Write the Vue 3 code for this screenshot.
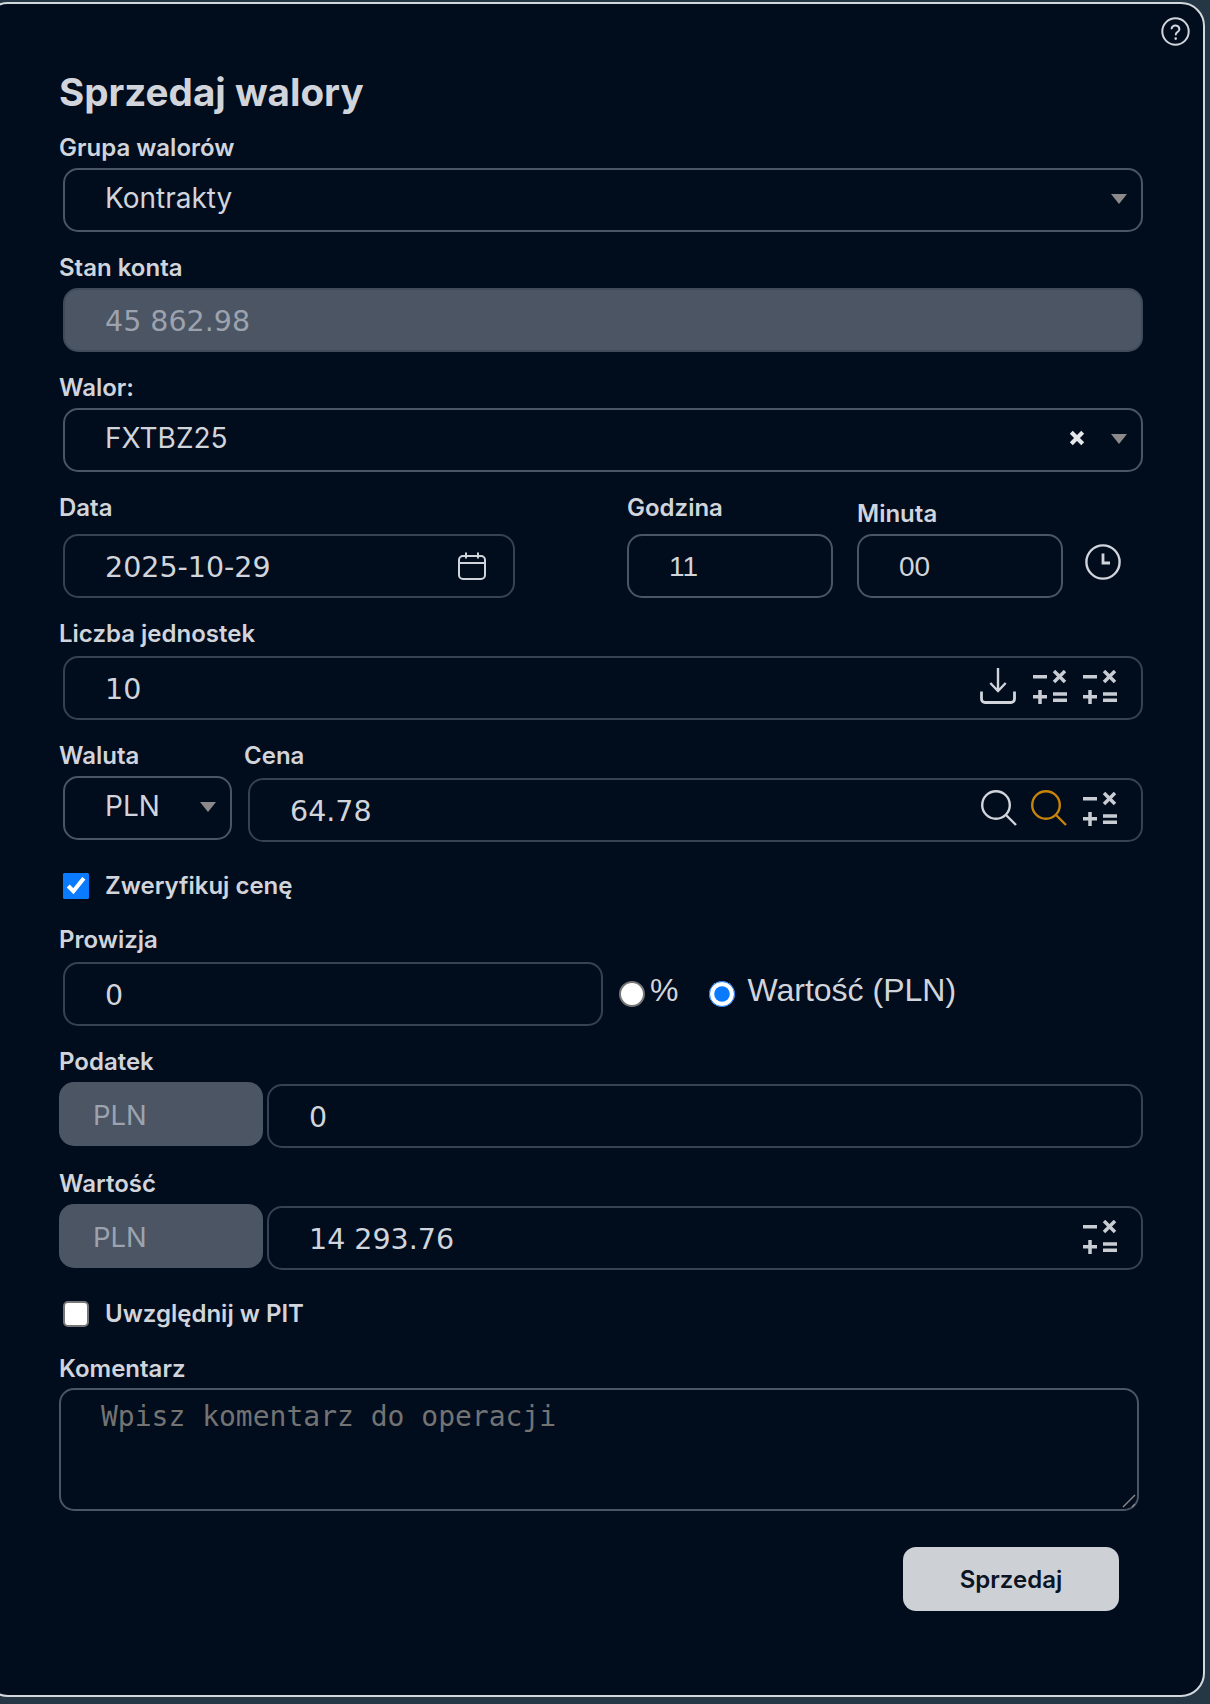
<script setup>
import { ref } from 'vue'

const group = ref('Kontrakty')
const asset = ref('FXTBZ25')
const currency = ref('PLN')
const verify = ref(true)
const inPit = ref(false)
const feeType = ref('value')
</script>

<template>
  <div class="card">
    <svg class="help" viewBox="0 0 29 29" fill="none" stroke="currentColor" stroke-width="2">
      <circle cx="14.5" cy="14.5" r="13.2" />
      <path d="M10.6 11.4a4 4 0 0 1 7.8 .8c0 2.6-3.6 3-3.6 5.2" stroke-linecap="round" />
      <circle cx="14.7" cy="21.6" r="1.3" fill="currentColor" stroke="none" />
    </svg>

    <h1 class="title">Sprzedaj walory</h1>

    <div class="field first">
      <label class="label gap6">Grupa walorów</label>
      <div class="control pick">
        <select v-model="group" class="sel">
          <option>Kontrakty</option>
        </select>
        <span class="caret"></span>
      </div>
    </div>

    <div class="field">
      <label class="label gap6">Stan konta</label>
      <div class="control disabled">
        <input class="inp" value="45 862.98" disabled />
      </div>
    </div>

    <div class="field">
      <label class="label gap6">Walor:</label>
      <div class="control pick">
        <select v-model="asset" class="sel">
          <option>FXTBZ25</option>
        </select>
        <svg class="clear" viewBox="0 0 14 14" stroke="currentColor" stroke-width="3.6">
          <path d="M2 2l10 10M12 2L2 12" />
        </svg>
        <span class="caret"></span>
      </div>
    </div>

    <div class="field date-row">
      <div class="date-col">
        <label class="label gap12">Data</label>
        <div class="control soft">
          <input class="inp" value="2025-10-29" />
          <svg class="calendar" viewBox="0 0 30 30" fill="none" stroke="currentColor" stroke-width="2">
            <rect x="2" y="5" width="26" height="23" rx="4" />
            <path d="M2 12h26M9 1.5v6M21 1.5v6" />
          </svg>
        </div>
      </div>
      <div class="hour-col">
        <label class="label gap12">Godzina</label>
        <div class="control">
          <input class="inp plain" value="11" />
        </div>
      </div>
      <div class="minute-col">
        <label class="label gap6">Minuta</label>
        <div class="control">
          <input class="inp plain" value="00" />
        </div>
      </div>
      <svg class="clock" viewBox="0 0 36 36" fill="none" stroke="currentColor" stroke-width="2.4">
        <circle cx="18" cy="18" r="16.6" />
        <path d="M18 9.5v9.5h7" stroke-width="2.8" />
      </svg>
    </div>

    <div class="field">
      <label class="label gap8">Liczba jednostek</label>
      <div class="control soft">
        <input class="inp" value="10" />
        <svg class="download" viewBox="0 0 36 36" fill="none" stroke="currentColor" stroke-width="2.4">
          <path d="M18 0v23M10.300 15l7.700 8 7.700-8" />
          <path d="M1.500 23.500v7.500a3.500 3.500 0 0 0 3.500 3.500h26a3.500 3.500 0 0 0 3.500-3.500v-7.500" stroke-width="2.800" />
        </svg>
        <svg class="calc" viewBox="0 0 34 34" fill="none" stroke="currentColor" stroke-width="3.500">
          <path d="M0 6.700h14M21 1l11 11M32 1L21 12M0 26.700h14M7 20v14M20 24h14M20 30.200h14" />
        </svg>
        <svg class="calc" viewBox="0 0 34 34" fill="none" stroke="currentColor" stroke-width="3.500">
          <path d="M0 6.700h14M21 1l11 11M32 1L21 12M0 26.700h14M7 20v14M20 24h14M20 30.200h14" />
        </svg>
      </div>
    </div>

    <div class="field price-row">
      <div class="currency-col">
        <label class="label gap6">Waluta</label>
        <div class="control pick narrow">
          <select v-model="currency" class="sel">
            <option>PLN</option>
          </select>
          <span class="caret"></span>
        </div>
      </div>
      <div class="price-col">
        <label class="label gap8">Cena</label>
        <div class="control soft price">
          <input class="inp" value="64.78" />
          <svg class="search" viewBox="0 0 36 36" fill="none" stroke="currentColor" stroke-width="2.4">
            <circle cx="15" cy="15" r="13.800" />
            <path d="M25 25l10 10" />
          </svg>
          <svg class="search orange" viewBox="0 0 36 36" fill="none" stroke="currentColor" stroke-width="2.4">
            <circle cx="15" cy="15" r="13.800" />
            <path d="M25 25l10 10" />
          </svg>
          <svg class="calc" viewBox="0 0 34 34" fill="none" stroke="currentColor" stroke-width="3.500">
            <path d="M0 6.700h14M21 1l11 11M32 1L21 12M0 26.700h14M7 20v14M20 24h14M20 30.200h14" />
          </svg>
        </div>
      </div>
    </div>

    <label class="check verify">
      <input v-model="verify" type="checkbox" />
      <span>Zweryfikuj cenę</span>
    </label>

    <div class="field f-fee">
      <label class="label gap8">Prowizja</label>
      <div class="fee-row">
        <div class="control soft fee">
          <input class="inp" value="0" />
        </div>
        <input v-model="feeType" class="radio r-pct" type="radio" value="pct" />
        <span class="radio-text pct">%</span>
        <input v-model="feeType" class="radio r-val" type="radio" value="value" />
        <span class="radio-text">Wartość (PLN)</span>
      </div>
    </div>

    <div class="field">
      <label class="label gap6">Podatek</label>
      <div class="addon-row">
        <span class="addon">PLN</span>
        <div class="control soft addon-input">
          <input class="inp" value="0" />
        </div>
      </div>
    </div>

    <div class="field">
      <label class="label gap6">Wartość</label>
      <div class="addon-row">
        <span class="addon">PLN</span>
        <div class="control soft addon-input">
          <input class="inp" value="14 293.76" />
          <svg class="calc" viewBox="0 0 34 34" fill="none" stroke="currentColor" stroke-width="3.500">
            <path d="M0 6.700h14M21 1l11 11M32 1L21 12M0 26.700h14M7 20v14M20 24h14M20 30.200h14" />
          </svg>
        </div>
      </div>
    </div>

    <label class="check pit">
      <input v-model="inPit" type="checkbox" />
      <span>Uwzględnij w PIT</span>
    </label>

    <div class="field f-note">
      <label class="label gap5">Komentarz</label>
      <div class="note-wrap">
        <textarea class="note" placeholder="Wpisz komentarz do operacji"></textarea>
        <svg class="grip" viewBox="0 0 14 14" stroke="#8c8c8c" stroke-width="1.400">
          <path d="M1 13L13 1M10 13l3-3" />
        </svg>
      </div>
    </div>

    <div class="actions">
      <button class="submit" type="button">Sprzedaj</button>
    </div>
  </div>
</template>

<style scoped>
.card {
  position: relative;
  box-sizing: border-box;
  width: 1221px;
  height: 1695px;
  margin: 2px 0 0 -16px;
  padding: 66px 60px 0 73px;
  background: #010c1d;
  border: 2px solid #d3d8dd;
  border-radius: 24px;
  font-family: Inter, "Liberation Sans", sans-serif;
  color: #d1d5db;
}
.help {
  position: absolute;
  top: 13px;
  right: 13px;
  width: 29px;
  height: 29px;
}
.title {
  margin: 0;
  height: 44px;
  font-size: 38.6px;
  line-height: 44px;
  font-weight: 700;
}
.field {
  margin-top: 22px;
}
.first {
  margin-top: 20px;
}
.label {
  display: block;
  height: 28px;
  margin-bottom: 7px;
  font-size: 24px;
  line-height: 28px;
  font-weight: 600;
}
.gap5 { margin-bottom: 5px; }
.gap6 { margin-bottom: 6px; }
.gap8 { margin-bottom: 8px; }
.gap12 { margin-bottom: 12px; }

.control {
  position: relative;
  box-sizing: border-box;
  display: flex;
  align-items: center;
  height: 64px;
  margin-left: 4px;
  padding: 0 24px 0 40px;
  border: 2px solid #4b5563;
  border-radius: 15px;
}
.pick {
  padding: 0 14px 5px 40px;
}
.soft {
  border-color: #374151;
}
.disabled {
  background: #4b5563;
  border-color: #3f4a5a;
}
.inp,
.sel {
  flex: 1;
  min-width: 0;
  height: 100%;
  padding: 0;
  border: 0;
  outline: 0;
  background: transparent;
  color: #d1d5db;
  appearance: none;
}
.inp {
  box-sizing: border-box;
  padding-top: 3px;
  font-family: "DejaVu Sans", sans-serif;
  font-size: 28.5px;
}
.plain {
  padding-top: 1px;
  font-family: "Liberation Sans", Arial, sans-serif;
  font-size: 28px;
}
.inp:disabled {
  color: #9ca3af;
  opacity: 1;
}
.sel {
  font-family: Inter, "Liberation Sans", sans-serif;
  font-size: 28px;
}
.caret {
  width: 0;
  height: 0;
  margin: 3px 0 0 26px;
  border-left: 8px solid transparent;
  border-right: 8px solid transparent;
  border-top: 10px solid #8a8a8a;
}
.clear {
  width: 16px;
  height: 16px;
  color: #e5e7eb;
}

.date-row {
  display: flex;
  align-items: flex-end;
}
.date-col {
  width: 456px;
}
.hour-col {
  width: 206px;
  margin-left: 112px;
}
.minute-col {
  width: 206px;
  margin-left: 24px;
}
.hour-col .control,
.minute-col .control {
  margin-left: 0;
}
.clock {
  width: 36px;
  height: 36px;
  margin: 0 0 18px 22px;
}
.calendar {
  width: 30px;
  height: 30px;
  margin-right: 2px;
}
.download {
  width: 36px;
  height: 36px;
  margin-right: 17px;
  margin-bottom: 4px;
}
.calc {
  width: 34px;
  height: 34px;
  margin-left: 16px;
  margin-bottom: 2px;
  color: #c9cdd3;
}
.download + .calc {
  margin-left: 0;
}
.search {
  width: 36px;
  height: 36px;
  margin-right: 14px;
  margin-bottom: 4px;
}
.orange {
  margin-right: 0;
  color: #c8840a;
}

.price-row {
  display: flex;
  align-items: flex-start;
}
.currency-col {
  width: 173px;
}
.narrow {
  padding-right: 14px;
}
.price-col {
  flex: 1;
  margin-left: 12px;
}
.price {
  margin-left: 4px;
}

.check {
  display: flex;
  align-items: center;
  gap: 16px;
  height: 26px;
  margin-left: 4px;
  font-size: 24px;
  line-height: 26px;
  font-weight: 600;
}
.check input {
  width: 26px;
  height: 26px;
  margin: 0;
  accent-color: #0a7aff;
}
.check input:not(:checked) {
  appearance: none;
  box-sizing: border-box;
  background: #fff;
  border: 2px solid #767676;
  border-radius: 5px;
}
.verify {
  margin-top: 31px;
}
.pit {
  margin-top: 31px;
}
.f-fee {
  margin-top: 27px;
}
.f-note {
  margin-top: 28px;
}

.fee-row {
  display: flex;
  align-items: center;
}
.fee {
  width: 540px;
  flex: none;
}
.radio {
  width: 26px;
  height: 26px;
  margin: 0;
  accent-color: #0a7aff;
}
.radio:not(:checked) {
  appearance: none;
  box-sizing: border-box;
  background: #fff;
  border: 2px solid #767676;
  border-radius: 50%;
}
.r-pct {
  margin-left: 16px;
}
.r-val {
  margin-left: 31px;
}
.radio-text {
  margin: -8px 0 0 12px;
  font-family: "Liberation Sans", Arial, sans-serif;
  font-size: 32px;
}
.pct {
  margin-left: 5px;
}

.addon-row {
  display: flex;
  align-items: flex-start;
}
.addon {
  box-sizing: border-box;
  flex: none;
  width: 204px;
  height: 64px;
  padding-left: 34px;
  background: #4b5563;
  border-radius: 15px;
  color: #9ca3af;
  font-size: 27.5px;
  line-height: 66px;
}
.addon-input {
  flex: 1;
  margin: 2px 0 0 4px;
}

.note-wrap {
  position: relative;
  width: 1080px;
}
.note {
  display: block;
  box-sizing: border-box;
  width: 100%;
  height: 123px;
  padding: 10px 40px;
  background: transparent;
  border: 2px solid #4b5563;
  border-radius: 15px;
  outline: 0;
  resize: none;
  color: #d1d5db;
  font-family: "DejaVu Sans Mono", monospace;
  font-size: 28px;
}
.note::placeholder {
  color: #737373;
}
.grip {
  position: absolute;
  right: 3px;
  bottom: 3px;
  width: 14px;
  height: 14px;
}

.actions {
  display: flex;
  justify-content: flex-end;
  margin-top: 36px;
  padding-right: 24px;
}
.submit {
  width: 216px;
  height: 64px;
  padding: 0;
  border: 0;
  border-radius: 13px;
  background: #cdd1d5;
  color: #0b1424;
  font-family: Inter, "Liberation Sans", sans-serif;
  font-size: 24px;
  font-weight: 600;
}
</style>

<style>
html,
body {
  background: #253645;
  overflow: hidden;
}
</style>
